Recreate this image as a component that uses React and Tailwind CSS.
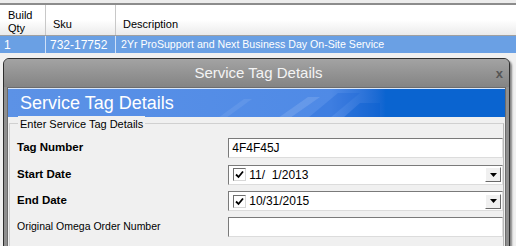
import React from 'react';

const ui = { fontFamily: '"Liberation Sans", Arial, sans-serif' };

function Checkbox() {
  return (
    <span className="w-[13px] h-[13px] border border-[#6e6e6e] border-r-[#d8d8d8] border-b-[#d8d8d8] bg-white flex items-center justify-center shrink-0">
      <svg width="9" height="9" viewBox="0 0 9 9">
        <path d="M1 4.5 L3.5 7 L8 1.5" fill="none" stroke="#000" strokeWidth="1.8" />
      </svg>
    </span>
  );
}

function DateField({ value }) {
  return (
    <div className="w-[277px] h-[20px] border border-[#7a7a7a] border-r-[#dcdcdc] border-b-[#dcdcdc] bg-white flex items-center pl-[4px] pr-[1px] gap-[3px]">
      <Checkbox />
      <span className="text-[12px] text-black flex-1 whitespace-pre">{value}</span>
      <span className="w-[16px] h-[15px] bg-[#f0f0f0] border border-[#fff] border-r-[#6a6a6a] border-b-[#6a6a6a] flex items-center justify-center">
        <svg width="7" height="4" viewBox="0 0 7 4">
          <path d="M0 0 H7 L3.5 4 Z" fill="#000" />
        </svg>
      </span>
    </div>
  );
}

function Row({ label, bold, h, children }) {
  return (
    <div className={`flex items-center ${h}`}>
      <span className={`w-[220px] pl-[7px] text-black ${bold ? 'font-bold text-[11.5px]' : 'text-[10.5px]'}`}>{label}</span>
      {children}
    </div>
  );
}

export default function App() {
  return (
    <div className="w-[516px] h-[246px] bg-[#f0f0f0] relative overflow-hidden" style={ui}>
      {/* grid */}
      <div className="h-[3px] bg-[#ececec]" />
      <div className="h-[2px] bg-[#8c8c8c]" />
      <div className="flex h-[31px] bg-gradient-to-b from-white via-white to-[#ebebeb] border-b border-[#a0a0a0] text-[11px] text-black">
        <div className="w-[46px] border-r border-[#c8c8c8] pl-[8px] pt-[4px] leading-[13px]">Build<br />Qty</div>
        <div className="w-[70px] border-r border-[#c8c8c8] pl-[7px] flex items-center pt-[8px]">Sku</div>
        <div className="flex-1 pl-[7px] flex items-center pt-[8px]">Description</div>
      </div>
      <div className="flex h-[17px] bg-[#6aa0e4] text-[11px] text-white items-center">
        <div className="w-[46px] border-r border-[#cfe0f7] h-full pl-[4px] flex items-center text-[12px]">1</div>
        <div className="w-[70px] border-r border-[#cfe0f7] h-full pl-[4px] flex items-center text-[12px]">732-17752</div>
        <div className="flex-1 pl-[5px] whitespace-nowrap text-[10.6px]">2Yr ProSupport and Next Business Day On-Site Service</div>
      </div>

      {/* dialog window over the grid */}
      <div className="absolute left-[3px] top-[58px] w-[507px] h-[200px] rounded-t-[6px] border border-[#2e2e2e] bg-[#8f8f8f] shadow-[2px_2px_2px_rgba(0,0,0,0.45)] flex flex-col">
        <div className="h-[28px] shrink-0 rounded-t-[5px] bg-gradient-to-b from-[#a3a3a3] to-[#848484] flex items-center relative">
          <span className="flex-1 text-center text-[15px] text-[#f4f4f4] pl-[4px]">Service Tag Details</span>
          <span className="absolute right-[6px] top-[5px] text-[13px] font-bold text-[#555]">x</span>
        </div>
        <div className="flex-1 mx-[3px] border border-[#6c6c6c] bg-[#f0f0f0] flex flex-col">
          <div className="h-[29px] border-t border-[#d8e6fa] bg-gradient-to-r from-[#5c92e6] via-[#4f8ae6] via-65% to-[#0a64d0] to-76% flex items-center pl-[12px] relative overflow-hidden">
            <svg className="absolute left-0 top-0" width="500" height="29" viewBox="0 0 500 29">
              <path d="M270 29 L300 8 L312 8 L282 29 Z" fill="#ffffff" opacity="0.12" />
              <path d="M300 29 L330 4 L352 4 L322 29 Z" fill="#1f66d8" opacity="0.35" />
              <path d="M335 29 L352 14 L372 14 L372 29 Z" fill="#0a5fd0" opacity="0.45" />
              <path d="M210 29 L236 10 L244 10 L218 29 Z" fill="#ffffff" opacity="0.08" />
            </svg>
            <span className="text-[18px] text-white relative">Service Tag Details</span>
          </div>
          <div className="relative mt-[6px] ml-[1px] mr-[1px] border border-[#d0d0d0] border-r-[#b8b8b8] h-[200px] pt-[11px]">
            <span className="absolute -top-[8px] left-[8px] bg-[#f0f0f0] px-[2px] text-[11px] text-black">Enter Service Tag Details</span>
            <Row label="Tag Number" bold h="h-[26px]">
              <div className="w-[277px] h-[20px] border border-[#7a7a7a] border-r-[#dcdcdc] border-b-[#dcdcdc] bg-white flex items-center pl-[3px] text-[12px] text-black">4F4F45J</div>
            </Row>
            <Row label="Start Date" bold h="h-[27px]">
              <DateField value={'11/  1/2013'} />
            </Row>
            <Row label="End Date" bold h="h-[26px]">
              <DateField value="10/31/2015" />
            </Row>
            <Row label="Original Omega Order Number" h="h-[26px]">
              <div className="w-[277px] h-[20px] border border-[#7a7a7a] border-r-[#dcdcdc] border-b-[#dcdcdc] bg-white" />
            </Row>
          </div>
        </div>
      </div>
    </div>
  );
}
